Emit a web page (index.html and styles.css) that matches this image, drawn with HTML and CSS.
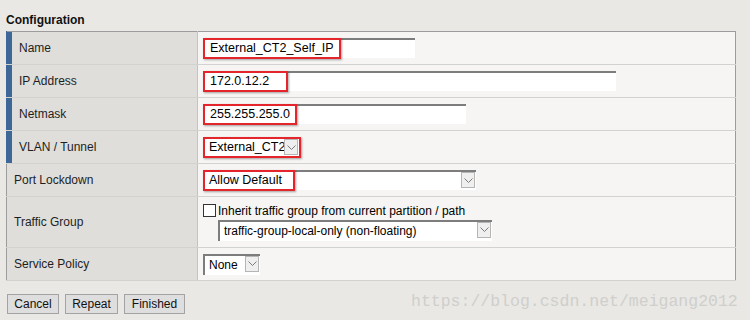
FILE: index.html
```html
<!DOCTYPE html>
<html lang="en">
<head>
    <meta charset="UTF-8">
    <title>Configuration</title>
    <link rel="stylesheet" href="styles.css">
</head>
<body>
    <div class="page">
        <h2 class="title">Configuration</h2>
        <table class="config">
            <colgroup>
                <col class="col-label">
                <col>
            </colgroup>
            <tr>
                <td class="label required">Name</td>
                <td class="value">
                    <div class="field w-name"><span class="mark m-name">External_CT2_Self_IP</span></div>
                </td>
            </tr>
            <tr>
                <td class="label required">IP Address</td>
                <td class="value">
                    <div class="field w-ip"><span class="mark m-ip">172.0.12.2</span></div>
                </td>
            </tr>
            <tr>
                <td class="label required">Netmask</td>
                <td class="value">
                    <div class="field w-mask"><span class="mark m-mask">255.255.255.0</span></div>
                </td>
            </tr>
            <tr>
                <td class="label required">VLAN / Tunnel</td>
                <td class="value">
                    <div class="field select w-vlan">
                        <span class="mark m-vlan">External_CT2</span>
                        <span class="arrow"><svg width="9" height="5" viewBox="0 0 9 5"><path d="M0.5 0.5 L4.5 4.5 L8.5 0.5" fill="none" stroke="#7a7a7a" stroke-width="1"/></svg></span>
                    </div>
                </td>
            </tr>
            <tr>
                <td class="label">Port Lockdown</td>
                <td class="value">
                    <div class="field select w-port">
                        <span class="mark m-port">Allow Default</span>
                        <span class="arrow"><svg width="9" height="5" viewBox="0 0 9 5"><path d="M0.5 0.5 L4.5 4.5 L8.5 0.5" fill="none" stroke="#7a7a7a" stroke-width="1"/></svg></span>
                    </div>
                </td>
            </tr>
            <tr class="tall">
                <td class="label">Traffic Group</td>
                <td class="value">
                    <div class="check-line"><span class="checkbox"></span>Inherit traffic group from current partition / path</div>
                    <div class="field select w-traffic">
                        <span class="plain">traffic-group-local-only (non-floating)</span>
                        <span class="arrow"><svg width="9" height="5" viewBox="0 0 9 5"><path d="M0.5 0.5 L4.5 4.5 L8.5 0.5" fill="none" stroke="#7a7a7a" stroke-width="1"/></svg></span>
                    </div>
                </td>
            </tr>
            <tr>
                <td class="label">Service Policy</td>
                <td class="value">
                    <div class="field select w-policy">
                        <span class="plain">None</span>
                        <span class="arrow"><svg width="9" height="5" viewBox="0 0 9 5"><path d="M0.5 0.5 L4.5 4.5 L8.5 0.5" fill="none" stroke="#7a7a7a" stroke-width="1"/></svg></span>
                    </div>
                </td>
            </tr>
        </table>
        <div class="buttons">
            <button class="btn w-cancel">Cancel</button>
            <button class="btn w-repeat">Repeat</button>
            <button class="btn w-finished">Finished</button>
        </div>
    </div>
    <div class="watermark">https://blog.csdn.net/meigang2012</div>
</body>
</html>
```

FILE: styles.css
```css
body {
    margin: 0;
    background: #e9e8e4;
    font-family: Arial, "Liberation Sans", sans-serif;
    font-size: 12px;
    color: #1e1e1e;
}
.page {
    padding: 0 6px;
}
.title {
    font-size: 12px;
    font-weight: bold;
    line-height: 14px;
    margin: 0;
    padding: 13px 0 4px 0;
    color: #111;
}
.config {
    width: 730px;
    border-collapse: collapse;
    table-layout: fixed;
    border: 1px solid #9c9c9c;
}
.col-label {
    width: 191px;
}
.config td {
    height: 32px;
    padding: 0;
    border-bottom: 1px solid #d2d2d0;
    vertical-align: middle;
}
.config tr.tall td {
    height: 50px;
}
.label {
    background: #dfdedb;
    border-right: 1px solid #c4c4c2;
    padding-left: 7px !important;
}
.label.required {
    border-left: 1px solid #3c6797;
    box-shadow: inset 5px 0 0 #3c6797;
    padding-left: 12px !important;
}
.value {
    background: #f6f5f3;
    padding-left: 5px !important;
}
.field {
    position: relative;
    display: flex;
    align-items: center;
    height: 20px;
    box-sizing: border-box;
    background: #fff;
    border-top: 2px solid #7d7d7d;
    border-left: 2px solid #7d7d7d;
}
.mark {
    display: flex;
    align-items: center;
    box-sizing: border-box;
    height: 21px;
    margin: -2px 0 0 -2px;
    padding-left: 5px;
    border: 2px solid #e4262c;
    box-shadow: 1px 1px 2px rgba(0, 0, 0, 0.35);
    color: #000;
    background: #fff;
    font-size: 12.5px;
}
.plain {
    padding-left: 4px;
    color: #000;
}
.select .arrow {
    position: absolute;
    right: 1px;
    top: 0;
    width: 14px;
    height: 16px;
    box-sizing: border-box;
    border: 1px solid #b5b5b5;
    background: #efefef;
    display: flex;
    align-items: center;
    justify-content: center;
}
.w-vlan .arrow {
    right: 3px;
}
.w-name { width: 212px; }
.w-ip { width: 413px; }
.w-mask { width: 263px; }
.w-vlan { width: 98px; }
.w-port { width: 273px; }
.w-traffic { width: 274px; margin-left: 15px; height: 21px; }
.w-policy { width: 57px; height: 21px; }
.m-name { width: 138px; }
.m-ip { width: 85px; }
.m-mask { width: 94px; }
.m-vlan { width: 98px; padding-left: 4px; }
.m-port { width: 92px; padding-left: 4px; }
.check-line {
    display: flex;
    align-items: center;
    height: 14px;
    margin: 0 0 2px 0;
    color: #000;
}
.checkbox {
    width: 13px;
    height: 13px;
    box-sizing: border-box;
    border: 1px solid #333;
    background: #fff;
    margin-right: 2px;
}
.buttons {
    display: flex;
    gap: 6px;
    margin-top: 13px;
    padding-left: 1px;
}
.btn {
    height: 20px;
    padding: 0;
    font-family: Arial, "Liberation Sans", sans-serif;
    font-size: 12px;
    color: #111;
    background: #dedede;
    border: 1px solid #a3a3a3;
}
.w-cancel { width: 52px; }
.w-repeat { width: 53px; }
.w-finished { width: 61px; }
.watermark {
    position: absolute;
    left: 411px;
    top: 292px;
    font-family: "Liberation Mono", monospace;
    font-size: 16.5px;
    color: #cfcfcc;
    white-space: nowrap;
}
```
